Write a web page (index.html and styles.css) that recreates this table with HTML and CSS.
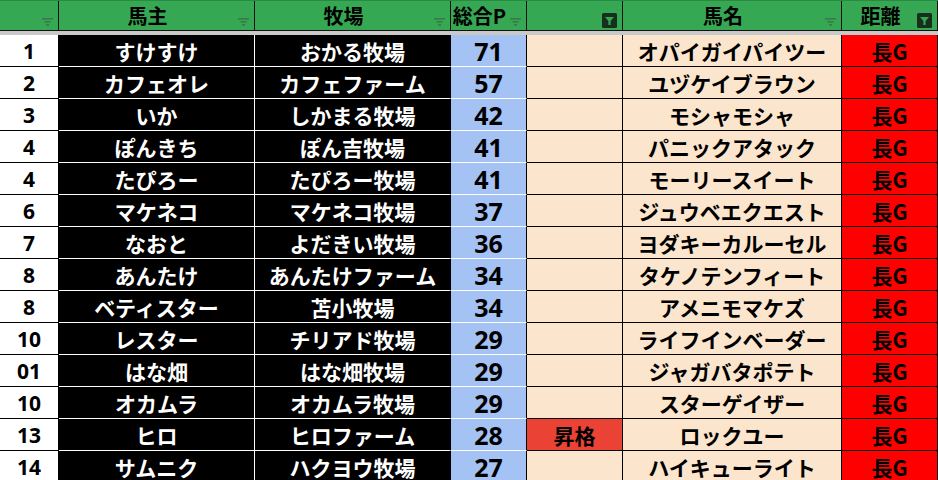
FILE: index.html
```html
<!DOCTYPE html>
<html lang="ja">
<head>
<meta charset="utf-8">
<link rel="stylesheet" href="styles.css">
</head>
<body>
<div class="sheet">
  <div class="row head">
    <div class="h"><span class="lbl"></span><svg class="fl" viewBox="0 0 11 8"><rect x="0" y="0" width="11" height="1.6"/><rect x="2.5" y="3" width="6" height="1.6"/><rect x="4" y="6" width="3" height="1.6"/></svg></div>
    <div class="h"><span class="lbl">馬主</span><svg class="fl" viewBox="0 0 11 8"><rect x="0" y="0" width="11" height="1.6"/><rect x="2.5" y="3" width="6" height="1.6"/><rect x="4" y="6" width="3" height="1.6"/></svg></div>
    <div class="h"><span class="lbl">牧場</span><svg class="fl" viewBox="0 0 11 8"><rect x="0" y="0" width="11" height="1.6"/><rect x="2.5" y="3" width="6" height="1.6"/><rect x="4" y="6" width="3" height="1.6"/></svg></div>
    <div class="h"><span class="lbl">総合P</span><svg class="fl" viewBox="0 0 11 8"><rect x="0" y="0" width="11" height="1.6"/><rect x="2.5" y="3" width="6" height="1.6"/><rect x="4" y="6" width="3" height="1.6"/></svg></div>
    <div class="h"><span class="lbl"></span><svg class="fa" viewBox="0 0 15 15"><rect x="0" y="0" width="15" height="15" rx="1.5" fill="#16301d"/><path d="M3 4 H12 L8.6 8 V12 H6.4 V8 Z" fill="#37a653"/></svg></div>
    <div class="h"><span class="lbl">馬名</span><svg class="fl" viewBox="0 0 11 8"><rect x="0" y="0" width="11" height="1.6"/><rect x="2.5" y="3" width="6" height="1.6"/><rect x="4" y="6" width="3" height="1.6"/></svg></div>
    <div class="h"><span class="lbl">距離</span><svg class="fa" viewBox="0 0 15 15"><rect x="0" y="0" width="15" height="15" rx="1.5" fill="#16301d"/><path d="M3 4 H12 L8.6 8 V12 H6.4 V8 Z" fill="#37a653"/></svg></div>
  </div>
  <div class="band"></div>

  <div class="row"><div class="c a">1</div><div class="c b">すけすけ</div><div class="c b c2">おかる牧場</div><div class="c d">71</div><div class="c e"></div><div class="c f">オパイガイパイツー</div><div class="c g">長G</div></div>
  <div class="row"><div class="c a">2</div><div class="c b">カフェオレ</div><div class="c b c2">カフェファーム</div><div class="c d">57</div><div class="c e"></div><div class="c f">ユヅケイブラウン</div><div class="c g">長G</div></div>
  <div class="row"><div class="c a">3</div><div class="c b">いか</div><div class="c b c2">しかまる牧場</div><div class="c d">42</div><div class="c e"></div><div class="c f">モシャモシャ</div><div class="c g">長G</div></div>
  <div class="row"><div class="c a">4</div><div class="c b">ぽんきち</div><div class="c b c2">ぽん吉牧場</div><div class="c d">41</div><div class="c e"></div><div class="c f">パニックアタック</div><div class="c g">長G</div></div>
  <div class="row"><div class="c a">4</div><div class="c b">たぴろー</div><div class="c b c2">たぴろー牧場</div><div class="c d">41</div><div class="c e"></div><div class="c f">モーリースイート</div><div class="c g">長G</div></div>
  <div class="row"><div class="c a">6</div><div class="c b">マケネコ</div><div class="c b c2">マケネコ牧場</div><div class="c d">37</div><div class="c e"></div><div class="c f">ジュウベエクエスト</div><div class="c g">長G</div></div>
  <div class="row"><div class="c a">7</div><div class="c b">なおと</div><div class="c b c2">よだきい牧場</div><div class="c d">36</div><div class="c e"></div><div class="c f">ヨダキーカルーセル</div><div class="c g">長G</div></div>
  <div class="row"><div class="c a">8</div><div class="c b">あんたけ</div><div class="c b c2">あんたけファーム</div><div class="c d">34</div><div class="c e"></div><div class="c f">タケノテンフィート</div><div class="c g">長G</div></div>
  <div class="row"><div class="c a">8</div><div class="c b">ベティスター</div><div class="c b c2">苫小牧場</div><div class="c d">34</div><div class="c e"></div><div class="c f">アメニモマケズ</div><div class="c g">長G</div></div>
  <div class="row"><div class="c a">10</div><div class="c b">レスター</div><div class="c b c2">チリアド牧場</div><div class="c d">29</div><div class="c e"></div><div class="c f">ライフインベーダー</div><div class="c g">長G</div></div>
  <div class="row"><div class="c a">01</div><div class="c b">はな畑</div><div class="c b c2">はな畑牧場</div><div class="c d">29</div><div class="c e"></div><div class="c f">ジャガバタポテト</div><div class="c g">長G</div></div>
  <div class="row"><div class="c a">10</div><div class="c b">オカムラ</div><div class="c b c2">オカムラ牧場</div><div class="c d">29</div><div class="c e"></div><div class="c f">スターゲイザー</div><div class="c g">長G</div></div>
  <div class="row"><div class="c a">13</div><div class="c b">ヒロ</div><div class="c b c2">ヒロファーム</div><div class="c d">28</div><div class="c e up">昇格</div><div class="c f">ロックユー</div><div class="c g">長G</div></div>
  <div class="row"><div class="c a">14</div><div class="c b">サムニク</div><div class="c b c2">ハクヨウ牧場</div><div class="c d">27</div><div class="c e"></div><div class="c f">ハイキューライト</div><div class="c g">長G</div></div>
</div>
</body>
</html>
```

FILE: styles.css
```css
html, body {
  margin: 0;
  padding: 0;
  background: #ffffff;
}
body {
  width: 938px;
  height: 480px;
  overflow: hidden;
  font-family: "Noto Sans CJK JP", "Noto Sans", sans-serif;
  font-weight: 700;
  color: #000;
}
.sheet {
  width: 938px;
}
.row {
  display: grid;
  grid-template-columns: 59px 196px 196px 76px 96px 219px 96px;
  height: 32px;
}
.head {
  height: 31px;
  background: #36a853;
  border-top: 1px solid #2a8a43;
  box-sizing: border-box;
}
.h {
  position: relative;
  box-sizing: border-box;
  border-right: 1px solid #111;
  border-bottom: 1px solid #111;
  display: flex;
  align-items: center;
  justify-content: center;
  padding-right: 18px;
  font-size: 20px;
  line-height: 28px;
}
.fl {
  position: absolute;
  right: 5px;
  bottom: 4px;
  width: 11px;
  height: 8px;
  fill: #3b6e48;
  opacity: 0.8;
}
.fa {
  position: absolute;
  right: 5px;
  bottom: 2px;
  width: 15px;
  height: 15px;
}
.band {
  height: 4px;
  background: #c9c9c9;
}
.c {
  box-sizing: border-box;
  display: flex;
  align-items: center;
  justify-content: center;
  font-size: 21px;
  line-height: 31px;
  padding-top: 2px;
  border-right: 1px solid #000;
  border-bottom: 1px solid #000;
  white-space: nowrap;
  overflow: hidden;
}
.a {
  background: #fff;
  color: #000;
  font-family: "Noto Sans", "Noto Sans CJK JP", sans-serif;
  font-size: 21px;
}
.b {
  background: #000;
  color: #fff;
  border-right-color: #fff;
  border-bottom-color: #fff;
}
.c2 {
  border-right-color: #000;
}
.d {
  background: #a4c2f4;
  font-family: "Noto Sans", "Noto Sans CJK JP", sans-serif;
  font-size: 25px;
  border-bottom-color: #fff;
}
.e {
  background: #fce5cd;
}
.up {
  background: #ea4335;
}
.f {
  background: #fce5cd;
}
.g {
  background: #ff0000;
}
```
